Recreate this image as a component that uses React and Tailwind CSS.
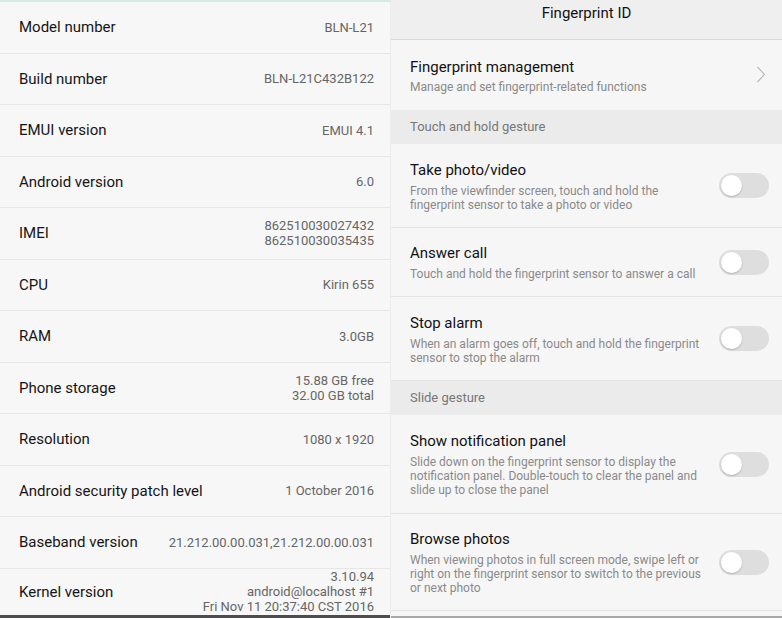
import React from 'react';

const info = [
  { label: 'Model number', value: ['BLN-L21'] },
  { label: 'Build number', value: ['BLN-L21C432B122'] },
  { label: 'EMUI version', value: ['EMUI 4.1'] },
  { label: 'Android version', value: ['6.0'] },
  { label: 'IMEI', value: ['862510030027432', '862510030035435'] },
  { label: 'CPU', value: ['Kirin 655'] },
  { label: 'RAM', value: ['3.0GB'] },
  { label: 'Phone storage', value: ['15.88 GB free', '32.00 GB total'] },
  { label: 'Resolution', value: ['1080 x 1920'] },
  { label: 'Android security patch level', value: ['1 October 2016'] },
  { label: 'Baseband version', value: ['21.212.00.00.031,21.212.00.00.031'] },
  { label: 'Kernel version', value: ['3.10.94', 'android@localhost #1', 'Fri Nov 11 20:37:40 CST 2016'] },
];

const Toggle = () => (
  <div className="w-[50px] h-[25px] rounded-full bg-[#dedede] flex items-center px-[2px] shrink-0">
    <div className="w-[21px] h-[21px] rounded-full bg-white shadow-[0_1px_2px_rgba(0,0,0,0.2)]"></div>
  </div>
);

const ToggleRow = ({ title, lines, height }) => (
  <div className={`flex items-center justify-between pl-[19px] pr-[13px] border-b border-[#e4e4e4] ${height}`}>
    <div>
      <div className="text-[15px] leading-[20px] text-[#111]">{title}</div>
      <div className="text-[12px] leading-[14px] text-[#8a8a8a] mt-[4px]">
        {lines.map((l) => <div key={l}>{l}</div>)}
      </div>
    </div>
    <Toggle />
  </div>
);

const Section = ({ children }) => (
  <div className="h-[34px] bg-[#ebebeb] flex items-center pl-[19px] text-[13px] text-[#777]">{children}</div>
);

const App = () => {
  return (
    <div className="w-[782px] h-[618px] flex overflow-hidden" style={{ fontFamily: 'Roboto, "Noto Sans", sans-serif' }}>
      {/* About phone */}
      <div className="w-[391px] h-full flex flex-col bg-[#f7f7f7] border-t-2 border-[#d7ebe6] border-r border-r-[#ececec] relative">
        {info.map((row, i) => (
          <div
            key={row.label}
            className={`flex items-center justify-between pl-[19px] pr-[16px] shrink-0 ${i === info.length - 1 ? 'flex-1 pb-[3px]' : 'h-[51.5px] border-b border-[#e6e6e6]'}`}
          >
            <span className="text-[15px] text-[#151515] whitespace-nowrap">{row.label}</span>
            <div className="text-right text-[13px] leading-[15px] text-[#666] whitespace-nowrap">
              {row.value.map((v) => <div key={v}>{v}</div>)}
            </div>
          </div>
        ))}
        <div className="absolute bottom-0 left-0 right-0 h-[3px] bg-[#4d4d4d]"></div>
      </div>

      {/* Fingerprint ID */}
      <div className="flex-1 h-full flex flex-col bg-[#f6f6f6] relative">
        <div className="h-[40px] shrink-0 bg-[#efefef] border-b border-[#d9d9d9] flex items-center justify-center pb-[14px] pt-[2px]">
          <span className="text-[15px] text-[#111]">Fingerprint ID</span>
        </div>
        <div className="h-[70px] shrink-0 flex items-center justify-between pl-[19px] pr-[16px]">
          <div>
            <div className="text-[15px] leading-[20px] text-[#111]">Fingerprint management</div>
            <div className="text-[12px] leading-[14px] text-[#8a8a8a] mt-[3px]">Manage and set fingerprint-related functions</div>
          </div>
          <svg width="10" height="17" viewBox="0 0 10 17" fill="none" className="mt-[-2px]">
            <path d="M1.5 1L8.5 8.5L1.5 16" stroke="#b8b8b8" strokeWidth="1.1" />
          </svg>
        </div>
        <Section>Touch and hold gesture</Section>
        <ToggleRow
          height="h-[84px]"
          title="Take photo/video"
          lines={['From the viewfinder screen, touch and hold the', 'fingerprint sensor to take a photo or video']}
        />
        <ToggleRow height="h-[69px]" title="Answer call" lines={['Touch and hold the fingerprint sensor to answer a call']} />
        <ToggleRow
          height="h-[84px]"
          title="Stop alarm"
          lines={['When an alarm goes off, touch and hold the fingerprint', 'sensor to stop the alarm']}
        />
        <Section>Slide gesture</Section>
        <ToggleRow
          height="h-[99px]"
          title="Show notification panel"
          lines={[
            'Slide down on the fingerprint sensor to display the',
            'notification panel. Double-touch to clear the panel and',
            'slide up to close the panel',
          ]}
        />
        <ToggleRow
          height="h-[97px]"
          title="Browse photos"
          lines={[
            'When viewing photos in full screen mode, swipe left or',
            'right on the fingerprint sensor to switch to the previous',
            'or next photo',
          ]}
        />
        <div className="absolute bottom-0 left-0 right-0 h-[2px] bg-[#a8a8a8]"></div>
      </div>
    </div>
  );
};

export default App;
